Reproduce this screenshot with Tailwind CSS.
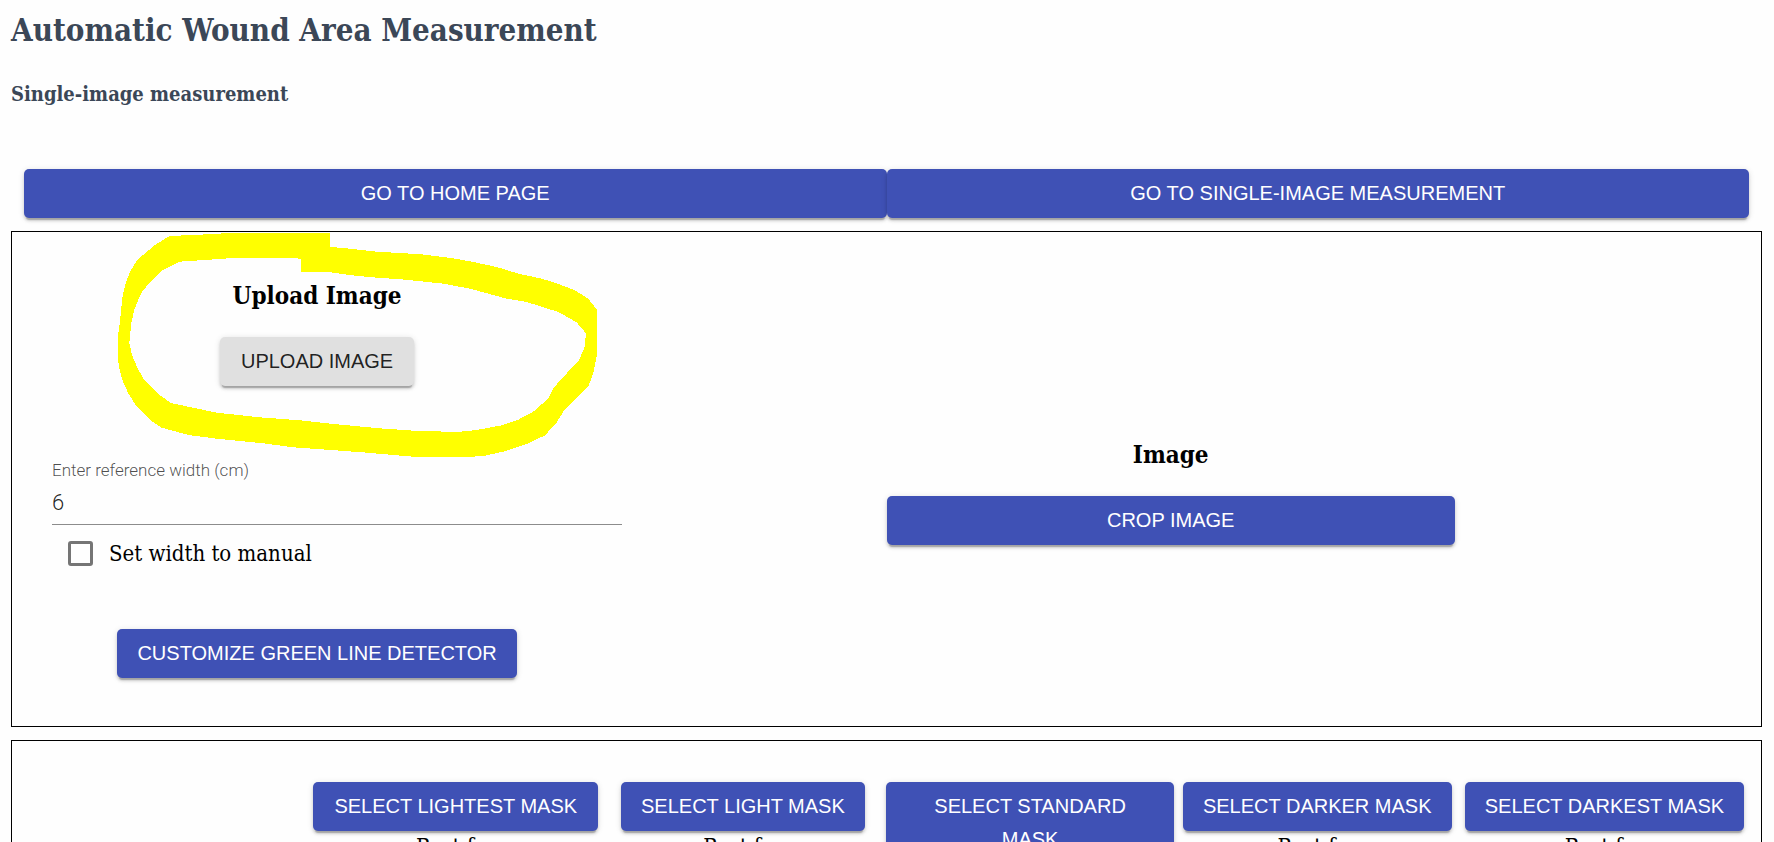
<!DOCTYPE html>
<html lang="en">
<head>
<meta charset="utf-8">
<title>Automatic Wound Area Measurement</title>
<script src="https://cdn.jsdelivr.net/npm/@tailwindcss/browser@4"></script>
</head>
<body class="h-screen overflow-hidden bg-[#fefefe] pr-3 pl-[11px] font-['Roboto_Slab','DejaVu_Serif_Condensed','DejaVu_Serif',serif] text-[22px] leading-8 text-black">
  <header class="pt-2 text-[#3b4757]">
    <h1 class="text-[31px] leading-11 font-bold">Automatic Wound Area Measurement</h1>
    <h2 class="mt-7 text-[20px] leading-7 font-bold">Single-image measurement</h2>
  </header>

  <nav class="mt-[61px] grid grid-cols-2 px-[13px] font-['Liberation_Sans',Arial,sans-serif] text-[20px] leading-[33px] text-white">
    <button class="rounded-[5px] bg-[#3f51b5] px-5 py-2 shadow-[0_4px_1px_-2px_rgb(0_0_0/0.2),0_3px_3px_rgb(0_0_0/0.14),0_1px_6px_rgb(0_0_0/0.12)]">GO TO HOME PAGE</button>
    <button class="rounded-[5px] bg-[#3f51b5] px-5 py-2 shadow-[0_4px_1px_-2px_rgb(0_0_0/0.2),0_3px_3px_rgb(0_0_0/0.14),0_1px_6px_rgb(0_0_0/0.12)]">GO TO SINGLE-IMAGE MEASUREMENT</button>
  </nav>

  <main>
    <section class="relative mt-[13px] grid grid-cols-2 border border-black pb-12">
      <!-- Highlighter stroke around the upload control -->
      <svg class="pointer-events-none absolute -top-3 left-[88px] h-[250px] w-[520px]" viewBox="0 0 1560 750" fill="#ffff00" fill-rule="evenodd" shape-rendering="crispEdges" aria-hidden="true">
        <path d="M690 39H388L322 43L208 48L165 75L130 104L108 126L91 153L76 192L67 232L60 305L54 345V420L59 450L67 480L85 520L107 555L150 600L185 623L265 645L350 656L490 670L580 682L680 689L800 698L950 711H1105L1155 707L1210 695L1280 672L1335 646L1368 610L1390 575L1465 500L1481 455L1491 405V270L1465 236L1425 211L1370 190L1325 176L1255 161L1190 141L1120 126L1060 115L965 103L830 95L730 84L690 81ZM603 118V156H686L755 166L830 173L915 179L1030 191L1110 206L1220 236L1280 246L1375 276L1430 307L1458 340L1453 385L1436 422L1400 460L1362 502L1346 534L1303 573L1255 599L1205 616L1130 630L1070 636L940 632L840 625L690 611L600 601L480 592L350 578L212 549L182 527L134 482L113 445L96 405L88 370L94 310L103 268L123 220L150 186L184 153L240 125L330 119L415 113H583Z"/>
      </svg>

      <div class="flex w-[70%] flex-col items-center pt-12 pr-0.5">
        <h3 class="text-[24px] leading-8 font-bold">Upload Image</h3>
        <button class="mt-[25px] rounded-[5px] bg-[#e0e0e0] px-[21px] py-2 font-['Liberation_Sans',Arial,sans-serif] text-[20px] leading-[33px] text-black/87 shadow-[0_4px_1px_-2px_rgb(0_0_0/0.2),0_3px_3px_rgb(0_0_0/0.14),0_1px_6px_rgb(0_0_0/0.12)]">UPLOAD IMAGE</button>
        <div class="mt-[74px] w-full pl-10 font-[Roboto,sans-serif]">
          <label for="width" class="block text-[17px] leading-5 font-light text-black/70">Enter reference width (cm)</label>
          <input id="width" type="text" value="6" class="mt-1 block h-[41px] w-full border-b border-[#8c8c8c] bg-transparent pb-1 text-[22px] font-light text-black/87 outline-none">
        </div>
        <label class="mt-3 flex w-full items-center gap-4 pl-14">
          <input type="checkbox" class="size-[25px] appearance-none rounded-[3px] border-3 border-[#757575]">
          <span class="pt-0.5 leading-[30px]">Set width to manual</span>
        </label>
        <button class="mt-[60px] rounded-[5px] bg-[#3f51b5] px-5 py-2 font-['Liberation_Sans',Arial,sans-serif] text-[20px] leading-[33px] text-white shadow-[0_4px_1px_-2px_rgb(0_0_0/0.2),0_3px_3px_rgb(0_0_0/0.14),0_1px_6px_rgb(0_0_0/0.12)]">CUSTOMIZE GREEN LINE DETECTOR</button>
      </div>

      <div class="flex w-[65%] flex-col justify-center pt-[74px] text-center">
        <h3 class="text-[24px] leading-8 font-bold">Image</h3>
        <button class="mt-[25px] rounded-[5px] bg-[#3f51b5] px-5 py-2 font-['Liberation_Sans',Arial,sans-serif] text-[20px] leading-[33px] text-white shadow-[0_4px_1px_-2px_rgb(0_0_0/0.2),0_3px_3px_rgb(0_0_0/0.14),0_1px_6px_rgb(0_0_0/0.12)]">CROP IMAGE</button>
      </div>
    </section>

    <section class="mt-[13px] grid grid-cols-6 border border-black px-[13px] pt-[41px] pb-10 text-center">
      <div></div>
      <div>
        <button class="rounded-[5px] bg-[#3f51b5] px-[21px] py-2 font-['Liberation_Sans',Arial,sans-serif] text-[20px] leading-[33px] text-white shadow-[0_4px_1px_-2px_rgb(0_0_0/0.2),0_3px_3px_rgb(0_0_0/0.14),0_1px_6px_rgb(0_0_0/0.12)]">SELECT LIGHTEST MASK</button>
        <p>Best for</p>
      </div>
      <div>
        <button class="rounded-[5px] bg-[#3f51b5] px-5 py-2 font-['Liberation_Sans',Arial,sans-serif] text-[20px] leading-[33px] text-white shadow-[0_4px_1px_-2px_rgb(0_0_0/0.2),0_3px_3px_rgb(0_0_0/0.14),0_1px_6px_rgb(0_0_0/0.12)]">SELECT LIGHT MASK</button>
        <p>Best for</p>
      </div>
      <div>
        <button class="w-full rounded-[5px] bg-[#3f51b5] px-5 py-2 font-['Liberation_Sans',Arial,sans-serif] text-[20px] leading-[33px] text-white shadow-[0_4px_1px_-2px_rgb(0_0_0/0.2),0_3px_3px_rgb(0_0_0/0.14),0_1px_6px_rgb(0_0_0/0.12)]">SELECT STANDARD MASK</button>
      </div>
      <div>
        <button class="rounded-[5px] bg-[#3f51b5] px-5 py-2 font-['Liberation_Sans',Arial,sans-serif] text-[20px] leading-[33px] text-white shadow-[0_4px_1px_-2px_rgb(0_0_0/0.2),0_3px_3px_rgb(0_0_0/0.14),0_1px_6px_rgb(0_0_0/0.12)]">SELECT DARKER MASK</button>
        <p>Best for</p>
      </div>
      <div>
        <button class="rounded-[5px] bg-[#3f51b5] px-5 py-2 font-['Liberation_Sans',Arial,sans-serif] text-[20px] leading-[33px] text-white shadow-[0_4px_1px_-2px_rgb(0_0_0/0.2),0_3px_3px_rgb(0_0_0/0.14),0_1px_6px_rgb(0_0_0/0.12)]">SELECT DARKEST MASK</button>
        <p>Best for</p>
      </div>
    </section>
  </main>
</body>
</html>
